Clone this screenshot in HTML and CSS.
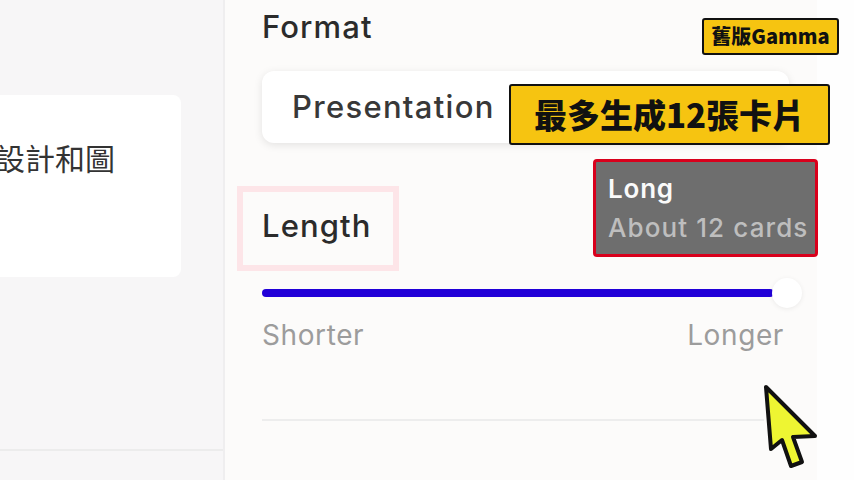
FILE: index.html
```html
<!doctype html>
<html lang="zh-Hant">
<head>
	<meta charset="UTF-8">
	<title>Gamma Length</title>
	<link rel="stylesheet" href="styles.css">
</head>
<body>
	<div class="stage">
		<aside class="side">
			<div class="side-card">
				<p class="side-text">設計和圖</p>
			</div>
			<div class="side-rule"></div>
		</aside>
		<main class="panel">
			<h2 class="field-label">Format</h2>
			<div class="select-box">Presentation</div>
			<h2 class="field-label length-label">Length</h2>
			<div class="slider">
				<div class="slider-track"></div>
				<div class="slider-thumb"></div>
			</div>
			<div class="slider-ends">
				<span>Shorter</span>
				<span>Longer</span>
			</div>
			<div class="panel-rule"></div>
		</main>
		<div class="edge"></div>

		<!-- annotations over the video frame -->
		<div class="tag tag-old">舊版Gamma</div>
		<div class="tag tag-max">最多生成12張卡片</div>
		<div class="mark-length"></div>
		<div class="tip">
			<b>Long</b>
			<span>About 12 cards</span>
		</div>
		<svg class="cursor" width="60" height="90" viewBox="0 0 60 90">
			<polygon points="6,4 11,66 22,57 31,83 42,79 33,54 55,53" fill="#eef532" stroke="#111" stroke-width="4" stroke-linejoin="round"/>
		</svg>
	</div>
</body>
</html>
```

FILE: styles.css
```css
* { padding: 0; margin: 0; box-sizing: border-box; }
html, body { width: 854px; height: 480px; overflow: hidden; }
body { background: #fefefe; font-family: Inter, "Noto Sans", "Noto Sans CJK TC", sans-serif; }

.stage { position: relative; display: flex; width: 854px; height: 480px; overflow: hidden; }

/* left column */
.side { width: 225px; flex: none; background: #f7f6f7; border-right: 2px solid #efeeef; padding-top: 95px; display: flex; flex-direction: column; }
.side-card { width: 181px; height: 182px; background: #fff; border-radius: 0 8px 8px 0; padding-top: 40px; overflow: hidden; }
.side-text { font-family: "Noto Sans CJK TC", sans-serif; font-size: 30px; line-height: 44px; color: #333; margin-left: -5px; white-space: nowrap; }
.side-rule { margin-top: auto; margin-bottom: 29px; height: 2px; background: #ececec; }

/* main column */
.panel { width: 592px; flex: none; background: #fcfbfa; padding: 6px 0 0 37px; }
.field-label { font-size: 31px; font-weight: 500; line-height: 42px; color: #2b2b2b; letter-spacing: 1.1px; }
.select-box { width: 527px; height: 72px; margin-top: 23px; padding-left: 30px; background: #fff; border-radius: 12px; box-shadow: 0 2px 8px rgba(0,0,0,0.10); font-size: 31px; font-weight: 500; line-height: 72px; color: #383838; letter-spacing: 1.3px; }
.length-label { margin-top: 62px; }
.slider { position: relative; display: flex; align-items: center; width: 541px; height: 32px; margin-top: 30px; }
.slider-track { width: 512px; height: 8px; border-radius: 4px; background: #2100d8; }
.slider-thumb { width: 30px; height: 30px; margin-left: -2px; border-radius: 50%; background: #fff; box-shadow: 0 1px 5px rgba(0,0,0,0.07); }
.slider-ends { display: flex; justify-content: space-between; width: 522px; margin-top: 6px; font-size: 28px; line-height: 40px; color: #9c9c9c; letter-spacing: 0.6px; }
.panel-rule { width: 502px; height: 2px; margin-top: 64px; background: #ededed; }

.edge { flex: 1; background: #fefefe; }

/* overlays */
.tag { position: absolute; background: #f6c411; border: 2px solid #111; border-radius: 3px; color: #111; font-weight: 900; font-family: "Noto Sans CJK TC", sans-serif; text-align: center; white-space: nowrap; }
.tag-old { left: 702px; top: 18px; width: 137px; height: 37px; font-size: 20px; line-height: 32px; }
.tag-max { left: 509px; top: 84px; width: 321px; height: 61px; font-size: 33px; line-height: 56px; }
.mark-length { position: absolute; left: 237px; top: 186px; width: 162px; height: 85px; border: 6px solid #fde5e8; }
.tip { position: absolute; left: 593px; top: 159px; width: 225px; height: 98px; background: #6e6e6e; border: 3px solid #d8001c; border-radius: 4px; padding: 8px 0 0 12px; display: flex; flex-direction: column; }
.tip b { font-size: 26px; font-weight: 600; line-height: 38px; color: #fafafa; letter-spacing: 0.8px; }
.tip span { font-size: 26px; font-weight: 500; line-height: 40px; color: #bebebe; white-space: nowrap; letter-spacing: 1.1px; }
.cursor { position: absolute; left: 760px; top: 383px; }
```
